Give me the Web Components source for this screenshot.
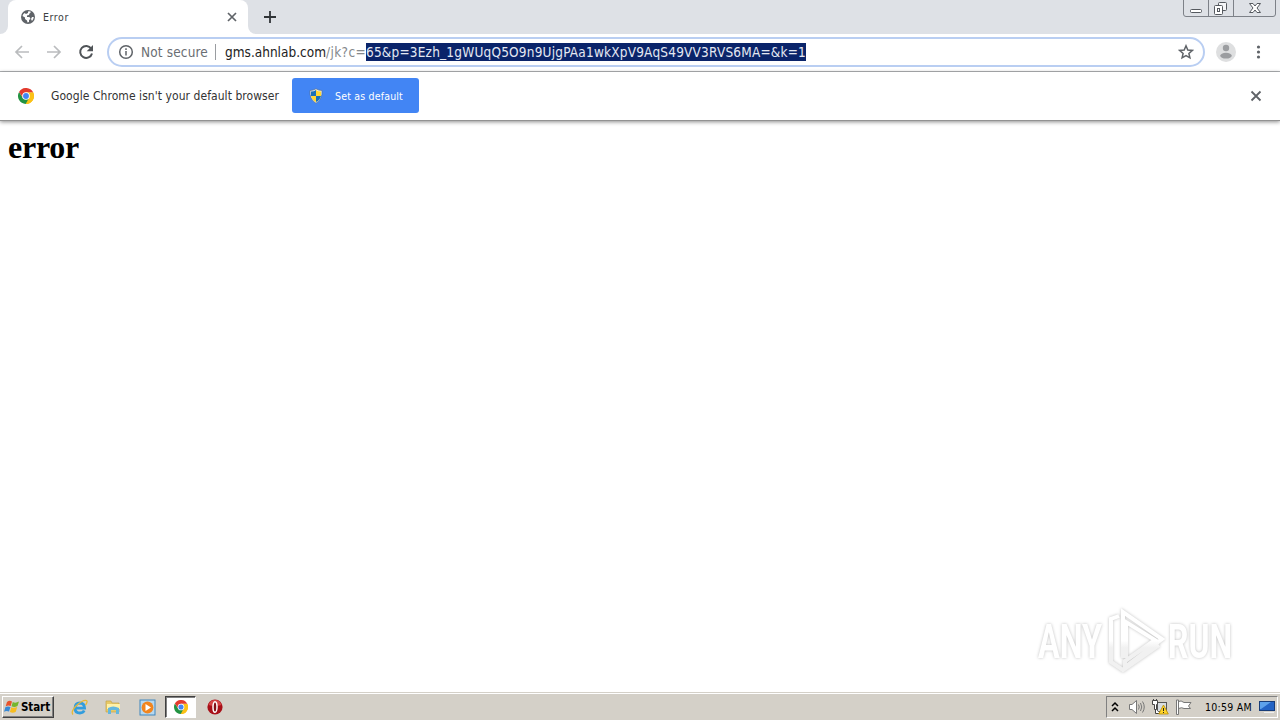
<!DOCTYPE html>
<html lang="en">
<head>
<meta charset="utf-8">
<title>Error</title>
<style>
  html, body { margin: 0; height: 100%; overflow: hidden; background: #fff; }
</style>
</head>
<body>
<desktop-screen></desktop-screen>

<script>
const define = (name, html, Base = HTMLElement) => {
  const template = document.createElement('template');
  template.innerHTML = html;
  customElements.define(name, class extends Base {
    constructor() {
      super();
      this.attachShadow({ mode: 'open' });
      this.shadowRoot.appendChild(template.content.cloneNode(true));
    }
  });
};

// one line of text spread over the given width
class FitLine extends HTMLElement {
  connectedCallback() {
    const width = Number(this.getAttribute('width'));
    const box = this.shadowRoot.querySelector('span');
    const natural = box.getBoundingClientRect().width;
    box.style.letterSpacing = `${(width - natural) / this.textContent.length}px`;
    this.style.width = `${width}px`;
  }
}

define('fit-line', `
  <style>
    :host { display: flex; flex: none; }
    span { display: block; flex: none; white-space: nowrap; }
  </style>
  <span><slot></slot></span>
`, FitLine);

define('chrome-logo', `
  <style>
    :host { display: block; flex: none; width: 16px; height: 16px; }
    svg { display: block; width: 100%; height: 100%; }
  </style>
  <svg viewBox="0 0 48 48">
    <path fill="#fbc116" d="M24 24L45 12.5A24 24 0 0 1 23 48L34 30Z"/>
    <path fill="#fbc116" d="M24 13H45.4A24 24 0 0 1 23 48Z"/>
    <path fill="#229342" d="M3.2 12A24 24 0 0 0 23 48L33.5 29.5L24 24L14.5 29.5Z"/>
    <path fill="#e33b2e" d="M3.2 12A24 24 0 0 1 45.4 13H24L14.5 29.5Z"/>
    <circle cx="24" cy="24" r="11.5" fill="#fff"/>
    <circle cx="24" cy="24" r="8.8" fill="#4285f4"/>
  </svg>
`);

define('window-buttons', `
  <style>
    :host { display: block; width: 94px; height: 18px; }
    svg { display: block; }
  </style>
  <svg width="94" height="18" fill="none" stroke="#7d8188">
    <path d="M.5 0V14Q.5 16.500 3 16.500H90Q92.500 16.500 92.500 14V0M25.500 0V16M50.500 0V16"/>
    <g stroke="#55595f">
      <rect x="7.500" y="9.500" width="11" height="3" rx="1" fill="#fff"/>
      <rect x="35.500" y="2.500" width="8" height="8" rx="1" fill="#f4f5f7"/>
      <rect x="31.500" y="5.500" width="8" height="9" rx="1" fill="#fff"/>
      <rect x="34.500" y="8.500" width="2" height="3"/>
      <path fill="#fff" d="M66.500 3.500H70L72 6L74 3.500H77.500L74 8L77.500 12.500H74L72 10L70 12.500H66.500L70 8Z"/>
    </g>
  </svg>
`);

define('tab-strip', `
  <style>
    :host { display: flex; box-sizing: border-box; height: 34px; background: #dee1e6; font: 10.5px/16px "DejaVu Sans Condensed", "DejaVu Sans", sans-serif; color: #3c4043; }
    .edge { width: 8px; background: #fff; }
    .edge i { display: block; height: 34px; background: #dee1e6; }
    .left i { border-radius: 0 0 8px 0; }
    .right i { border-radius: 0 0 0 8px; }
    .tab { display: flex; align-items: center; box-sizing: border-box; width: 240px; height: 34px; padding: 0 10px 0 12px; background: #fff; border-radius: 8px 8px 0 0; }
    .title { margin-left: 7px; }
    .close { margin-left: auto; }
    .plus { margin: 10px 0 0 7px; }
    window-buttons { margin-left: auto; margin-right: 3px; }
    svg { display: block; flex: none; }
  </style>
  <div class="edge left"><i></i></div>
  <div class="tab">
    <svg width="16" height="16" viewBox="0 0 16 16">
      <circle cx="8" cy="8" r="7" fill="#5f6368"/>
      <path fill="#fff" d="M8 2.500Q10 2 11 3L9.500 4.500L9 6L7 6.500L7 8H9.500L10.500 10L9 11V13L7.500 13.500L7 11.500L5 10L5 8.500L2.500 7Q3 5 4.500 4L6 5L8 4ZM12 8L13.800 8Q13.500 10.500 12 12L11 10Z"/>
    </svg>
    <fit-line class="title" width="26">Error</fit-line>
    <svg class="close" width="12" height="12" stroke="#5f6368" stroke-width="1.700"><path d="M2 2L10 10M10 2L2 10"/></svg>
  </div>
  <div class="edge right"><i></i></div>
  <svg class="plus" width="14" height="14" stroke="#303438" stroke-width="1.800"><path d="M7 1V13M1 7H13"/></svg>
  <window-buttons></window-buttons>
`);

define('address-bar', `
  <style>
    :host { display: flex; align-items: center; box-sizing: border-box; width: 1098px; height: 30px; padding: 0 9px; border: 2px solid #b9cef2; border-radius: 15px; background: #fff; font: 13.5px/18px "DejaVu Sans Condensed", "DejaVu Sans", sans-serif; color: #222; }
    svg { display: block; flex: none; }
    .state { margin-left: 7px; color: #6a6e73; }
    .rule { width: 1px; height: 16px; margin: 0 9px 0 7px; background: #9a9da1; }
    .path { color: #85898d; }
    .picked { height: 18px; background: #0a246a; color: #e4e8f2; }
    .star { margin-left: auto; }
  </style>
  <svg width="16" height="16" fill="none" stroke="#5f6368" stroke-width="1.500"><circle cx="8" cy="8" r="6.300"/><path d="M8 7V11.500M8 4.300V6"/></svg>
  <fit-line class="state" width="67">Not secure</fit-line>
  <span class="rule"></span>
  <fit-line width="101">gms.ahnlab.com</fit-line>
  <fit-line class="path" width="40">/jk?c=</fit-line>
  <fit-line class="picked" width="440">65&amp;p=3Ezh_1gWUqQ5O9n9UjgPAa1wkXpV9AqS49VV3RVS6MA=&amp;k=1</fit-line>
  <svg class="star" width="16" height="16" fill="none" stroke="#5f6368" stroke-width="1.500"><path d="M8 1.800L9.800 6L14.300 6.400L10.900 9.400L11.900 13.800L8 11.500L4.100 13.800L5.100 9.400L1.700 6.400L6.200 6Z"/></svg>
`);

define('browser-toolbar', `
  <style>
    :host { display: flex; align-items: center; box-sizing: border-box; height: 38px; padding: 0 0 1px 14px; border-bottom: 1px solid #b2b4b7; background: #fff; }
    svg { display: block; flex: none; margin-right: 16px; }
    address-bar { margin-left: -3px; }
    .avatar { margin: 0 14px 0 11px; }
    .menu { margin: 0; }
  </style>
  <svg width="16" height="16" fill="none" stroke="#babcbe" stroke-width="1.700"><path d="M15 8H2M8 2L2 8L8 14"/></svg>
  <svg width="16" height="16" fill="none" stroke="#babcbe" stroke-width="1.700"><path d="M1 8H14M8 2L14 8L8 14"/></svg>
  <svg width="16" height="16" fill="none" stroke="#505458" stroke-width="2"><path d="M13.200 4.600A6 6 0 1 0 14 9.500"/><path fill="#505458" stroke="none" d="M15 1V7.300H8.700Z"/></svg>
  <address-bar></address-bar>
  <svg class="avatar" width="20" height="20"><circle cx="10" cy="10" r="10" fill="#dedfe0"/><circle cx="10" cy="6" r="3.200" fill="#9b9da0"/><ellipse cx="10" cy="13.700" rx="5.800" ry="2.900" fill="#9b9da0"/></svg>
  <svg class="menu" width="16" height="16" fill="#5f6368"><circle cx="8.500" cy="3" r="1.600"/><circle cx="8.500" cy="8" r="1.600"/><circle cx="8.500" cy="13" r="1.600"/></svg>
`);

define('info-bar', `
  <style>
    :host { display: flex; align-items: center; box-sizing: border-box; height: 49px; padding: 0 18px 1px 18px; border-bottom: 1px solid #929292; box-shadow: 0 1px 4px rgba(0,0,0,.45); background: #fff; font: 12px/16px "DejaVu Sans Condensed", "DejaVu Sans", sans-serif; color: #333; }
    .message { margin-left: 17px; }
    .button { display: flex; align-items: center; box-sizing: border-box; width: 127px; height: 35px; margin-left: 13px; padding-left: 16px; border-radius: 3px; background: #4285f4; color: #fff; font-size: 10.5px; }
    .button fit-line { margin-left: 11px; }
    svg { display: block; flex: none; }
    .close { margin-left: auto; }
  </style>
  <chrome-logo></chrome-logo>
  <fit-line class="message" width="228">Google Chrome isn't your default browser</fit-line>
  <div class="button">
    <svg width="16" height="16">
      <path fill="#e7ecef" stroke="#596979" stroke-width=".6" d="M8 .8Q10.500 2.500 14 2.500Q14.800 11 8 15.200Q1.200 11 2 2.500Q5.500 2.500 8 .8Z"/>
      <path fill="#1870b9" d="M8 2V8H3V3.500Q6 3.500 8 2ZM8 8H13Q12 12 8 14Z"/>
      <path fill="#ffd735" d="M8 2Q10 3.500 13 3.500V8H8ZM3 8H8V14Q4 12 3 8Z"/>
    </svg>
    <fit-line width="68">Set as default</fit-line>
  </div>
  <svg class="close" width="12" height="12" stroke="#5f6368" stroke-width="1.800"><path d="M1.500 1.500L10.500 10.500M10.500 1.500L1.500 10.500"/></svg>
`);

define('any-run-mark', `
  <style>
    :host { display: block; width: 210px; height: 72px; }
    svg { display: block; filter: drop-shadow(0 0 1.500px rgba(0,0,0,.25)); }
    text { font: 700 49px Roboto, sans-serif; }
  </style>
  <svg width="210" height="72">
    <defs>
      <linearGradient id="fade" x1="0" y1="0" x2="0" y2="72" gradientUnits="userSpaceOnUse">
        <stop offset=".48" stop-color="#fff"/><stop offset=".58" stop-color="#f1f1f1"/>
      </linearGradient>
    </defs>
    <g fill="url(#fade)">
      <text transform="translate(9 52) scale(.66 1)" textLength="97" lengthAdjust="spacingAndGlyphs">ANY</text>
      <text transform="translate(139 52) scale(.66 1)" textLength="97" lengthAdjust="spacingAndGlyphs">RUN</text>
    </g>
    <g fill="none" stroke="url(#fade)" stroke-width="4">
      <path d="M94 50V6L133 33L96 61V55L126 34L97 16V50Z"/>
      <path d="M90 10L82 13V56L94 64L130 39"/>
    </g>
  </svg>
`);

define('page-view', `
  <style>
    :host { display: flex; flex: 1; flex-direction: column; justify-content: space-between; background: #fff; color: #000; font: 16px "Liberation Serif", serif; }
    h1 { margin: 8px 8px 0; font-size: 32px; line-height: 37px; }
    any-run-mark { align-self: flex-end; margin: 0 41px 14px 0; }
  </style>
  <h1><fit-line width="71">error</fit-line></h1>
  <any-run-mark></any-run-mark>
`);

define('start-button', `
  <style>
    :host { display: flex; align-items: center; box-sizing: border-box; width: 52px; height: 22px; padding-left: 1px; border: 1px solid; border-color: #fff #404040 #404040 #fff; box-shadow: inset -1px -1px #808080; font: 700 11.5px/14px "DejaVu Sans Condensed", "DejaVu Sans", sans-serif; color: #000; }
    svg { display: block; flex: none; margin-right: 1px; }
  </style>
  <svg width="16" height="16">
    <path fill="#e8532b" d="M3 3Q5.500 1 8 2.500L6.700 7Q4.500 5.700 1.700 7.200Z"/>
    <path fill="#75b62d" d="M8.800 3Q11.500 4.500 15 2.500L13.500 7Q10.500 8.600 7.500 7.300Z"/>
    <path fill="#3789d5" d="M1.500 8Q4 6.800 6.500 8L5 12.500Q2.500 11.300 0 12.700Z"/>
    <path fill="#f7bd20" d="M7.300 8.300Q10.300 9.500 13.200 8L11.800 12.700Q9 14.500 5.900 13Z"/>
  </svg>
  <fit-line width="29">Start</fit-line>
`);

define('system-tray', `
  <style>
    :host { display: flex; align-items: center; box-sizing: border-box; width: 172px; height: 22px; padding-left: 4px; border: 1px solid; border-color: #808080 #fff #fff #808080; font: 10.5px/14px "DejaVu Sans Condensed", "DejaVu Sans", sans-serif; color: #000; }
    svg { display: block; flex: none; }
    .sound { margin-left: 7px; }
    .network, .flag { margin-left: 7px; }
    .clock { margin-left: 13px; }
    .screen { margin-left: 7px; }
  </style>
  <svg width="10" height="14" fill="none" stroke="#000" stroke-width="1.500"><path d="M1 6L4 3L7 6M1 11L4 8L7 11"/></svg>
  <svg class="sound" width="17" height="16" fill="none" stroke="#777"><path fill="#fff" d="M1.500 5.500H4L8.500 1.500V14.500L4 10.500H1.500Z"/><path d="M10.500 5.500Q12 8 10.500 10.500M12.500 4Q15 8 12.500 12M14.500 2.500Q18 8 14.500 13.500"/></svg>
  <svg class="network" width="17" height="16" fill="none" stroke="#555"><rect x="5.500" y="3.500" width="9" height="9" fill="#d8dde1" stroke="#555"/><path stroke="#444" fill="#fff" d="M.5 1.500H5.500V5.500H4.500V10.500H2.500V5.500H.5ZM1.500 0V2M4.500 0V2M3.500 10V14.500H8"/><path fill="#ffd42a" stroke="#b78b00" stroke-width=".8" d="M11.500 6L16.300 15H6.700Z"/><path stroke="#222" d="M11.500 9V12M11.500 13V14"/></svg>
  <svg class="flag" width="16" height="16" fill="#fff" stroke="#777"><path d="M.5 1V15.500H2.500V1ZM2.500 2.500Q5 1 8 3.500H15L12.500 7L14.500 9.500H8Q6 8 2.500 9.500Z"/></svg>
  <fit-line class="clock" width="47">10:59 AM</fit-line>
  <svg class="screen" width="16" height="14"><rect x=".5" y="1.500" width="15" height="9" fill="#2464c5" stroke="#183d79"/><path fill="#5ea2eb" d="M1 2H12L2 9H1Z"/><path fill="#eee" d="M5 12H15V13H5Z"/></svg>
`);

define('task-bar', `
  <style>
    :host { display: flex; align-items: center; box-sizing: border-box; height: 28px; padding: 1px 1px 0 2px; background: #d4d0c8; border-top: 1px solid #d4d0c8; box-shadow: inset 0 1px #fff; }
    svg { display: block; flex: none; }
    .ie { margin-left: 17px; }
    .folder { margin-left: 17px; }
    .media { margin-left: 18px; }
    .active { display: flex; align-items: center; justify-content: center; box-sizing: border-box; width: 31px; height: 22px; margin-left: 9px; border: 1px solid; border-color: #404040 #fff #fff #404040; box-shadow: inset 1px 1px #808080; background: #fff; }
    .active chrome-logo { width: 14px; height: 14px; }
    .opera { margin-left: 11px; }
    system-tray { margin-left: auto; margin-right: 1px; }
  </style>
  <start-button></start-button>
  <svg class="ie" width="17" height="17" fill="none"><path stroke="#329ddd" stroke-width="2.800" d="M4 9.200H13.600Q13.400 4 8.900 4Q4 4.200 4 9.200Q4 14 9 14Q12 14 13.200 11.500"/><path stroke="#e8b834" stroke-width="1.300" d="M2 15.500Q-.5 13 5 7Q12 .5 15.500 1.500Q17 2.500 14.500 6"/></svg>
  <svg class="folder" width="16" height="16"><path fill="#e7c967" stroke="#c4a349" stroke-width=".7" d="M1 2H6L7 4H14V13H1Z"/><path fill="#fff1a8" d="M2 5H15V10H2Z"/><path fill="#64b7de" d="M3 9Q8 6 14 9V15H11V11H6V15H3Z"/></svg>
  <svg class="media" width="17" height="17"><rect x="1" y="1" width="15" height="15" fill="#b7d8ef" stroke="#3f86bd"/><circle cx="8.500" cy="8.500" r="5.900" fill="#f1851e"/><path fill="#fff" d="M6.500 5L12 8.500L6.500 12Z"/></svg>
  <div class="active"><chrome-logo></chrome-logo></div>
  <svg class="opera" width="16" height="16"><circle cx="8" cy="8" r="7.600" fill="#a80f18"/><path fill="#d64546" d="M1.500 6Q3 1 8 1T14.500 6Q8 8 1.500 6Z"/><ellipse cx="8" cy="8" rx="2" ry="5.300" fill="#831016" stroke="#fff" stroke-width="1.500"/></svg>
  <system-tray></system-tray>
`);

define('desktop-screen', `
  <style>
    :host { display: flex; flex-direction: column; width: 1280px; height: 720px; overflow: hidden; }
    tab-strip, browser-toolbar, info-bar, task-bar { flex: none; }
    info-bar { z-index: 1; }
  </style>
  <tab-strip></tab-strip>
  <browser-toolbar></browser-toolbar>
  <info-bar></info-bar>
  <page-view></page-view>
  <task-bar></task-bar>
`);
</script>
</body>
</html>
